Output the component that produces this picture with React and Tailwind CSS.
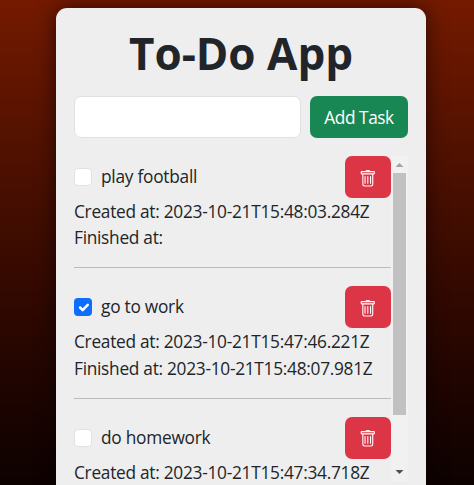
const tasks = [
  { name: "play football", created: "2023-10-21T15:48:03.284Z", finished: "", done: false },
  { name: "go to work", created: "2023-10-21T15:47:46.221Z", finished: "2023-10-21T15:48:07.981Z", done: true },
  { name: "do homework", created: "2023-10-21T15:47:34.718Z", done: false },
];

function TrashIcon() {
  return (
    <svg viewBox="0 0 16 16" className="h-[17.6px] w-[17.6px]" fill="currentColor">
      <path d="M5.5 5.5A.5.5 0 0 1 6 6v6a.5.5 0 0 1-1 0V6a.5.5 0 0 1 .5-.5m2.5 0a.5.5 0 0 1 .5.5v6a.5.5 0 0 1-1 0V6a.5.5 0 0 1 .5-.5m3 .5a.5.5 0 0 0-1 0v6a.5.5 0 0 0 1 0z" />
      <path d="M14.5 3a1 1 0 0 1-1 1H13v9a2 2 0 0 1-2 2H5a2 2 0 0 1-2-2V4h-.5a1 1 0 0 1-1-1V2a1 1 0 0 1 1-1H6a1 1 0 0 1 1-1h2a1 1 0 0 1 1 1h3.5a1 1 0 0 1 1 1zM4.118 4 4 4.059V13a1 1 0 0 0 1 1h6a1 1 0 0 0 1-1V4.059L11.882 4zM2.5 3h11V2h-11z" />
    </svg>
  );
}

function Checkbox({ checked }) {
  return checked ? (
    <span className="flex size-[18px] items-center justify-center rounded-[4px] bg-[#0d6efd]">
      <svg viewBox="0 0 20 20" className="size-[17px]" fill="none" stroke="#fff" strokeWidth="3" strokeLinecap="round" strokeLinejoin="round">
        <path d="m6 10 3 3 6-6" />
      </svg>
    </span>
  ) : (
    <span className="size-[18px] rounded-[4px] border border-[#dee2e6] bg-white" />
  );
}

function Task({ task }) {
  return (
    <li className="h-[130.4px] shrink-0">
      <div className="flex h-[42px] items-center">
        <Checkbox checked={task.done} />
        <span className="ml-[9px] grow tracking-[-0.25px]">{task.name}</span>
        <button aria-label="Delete task" className="flex h-[42px] w-[46px] items-center justify-center rounded-[7px] bg-[#dc3545] pt-[3px] text-white">
          <TrashIcon />
        </button>
      </div>
      <p className="h-[26.4px] leading-[27px] whitespace-nowrap tracking-[-0.27px]">Created at: {task.created}</p>
      {task.finished !== undefined && (
        <>
          <p className="h-[26.4px] leading-[27px] whitespace-nowrap tracking-[-0.28px]">Finished at: {task.finished}</p>
          <hr className="mt-[16.6px] border-t border-[#b9bbbc]" />
        </>
      )}
    </li>
  );
}

export default function App() {
  return (
    <main className="h-[485px] overflow-hidden bg-linear-to-b from-[#741a00] to-[#0d0200] pt-2 font-['Open_Sans','Noto_Sans',sans-serif] text-[17.3px] leading-[26.4px] text-[#212529]">
      <section className="ml-[56px] h-[520px] w-[370px] rounded-[11px] bg-[#eeeeee] px-[18px] pt-[18px] shadow-[0_0_20px_rgba(0,0,0,0.6)]">
        <h1 className="h-[70px] text-center text-[44px] leading-[55px] font-bold whitespace-nowrap">To-Do App</h1>
        <form className="flex gap-[9px]">
          <input aria-label="New task" className="h-[42px] w-[227px] rounded-[7px] border border-[#dee2e6] bg-white px-3" />
          <button type="button" className="h-[42px] w-[98px] rounded-[7px] bg-[#198754] pt-[2px] tracking-[-0.45px] whitespace-nowrap text-white">
            Add Task
          </button>
        </form>
        <div className="mt-[18px] flex h-[329px] w-[334px] items-start overflow-hidden">
          <ul className="flex w-[317px] flex-col">
            {tasks.map((task) => (
              <Task key={task.name} task={task} />
            ))}
          </ul>
          <div className="flex h-[325px] w-[17px] flex-col items-center bg-[#f1f1f1]">
            <svg viewBox="0 0 17 17" className="h-[17px] w-[17px] shrink-0">
              <path d="M4.5 11h8l-4-4z" fill="#a3a3a3" />
            </svg>
            <div className="h-[242px] w-[13px] shrink-0 bg-[#c1c1c1]" />
            <div className="grow" />
            <svg viewBox="0 0 17 17" className="h-[17px] w-[17px] shrink-0">
              <path d="M4.5 6h8l-4 4z" fill="#505050" />
            </svg>
          </div>
        </div>
      </section>
    </main>
  );
}
